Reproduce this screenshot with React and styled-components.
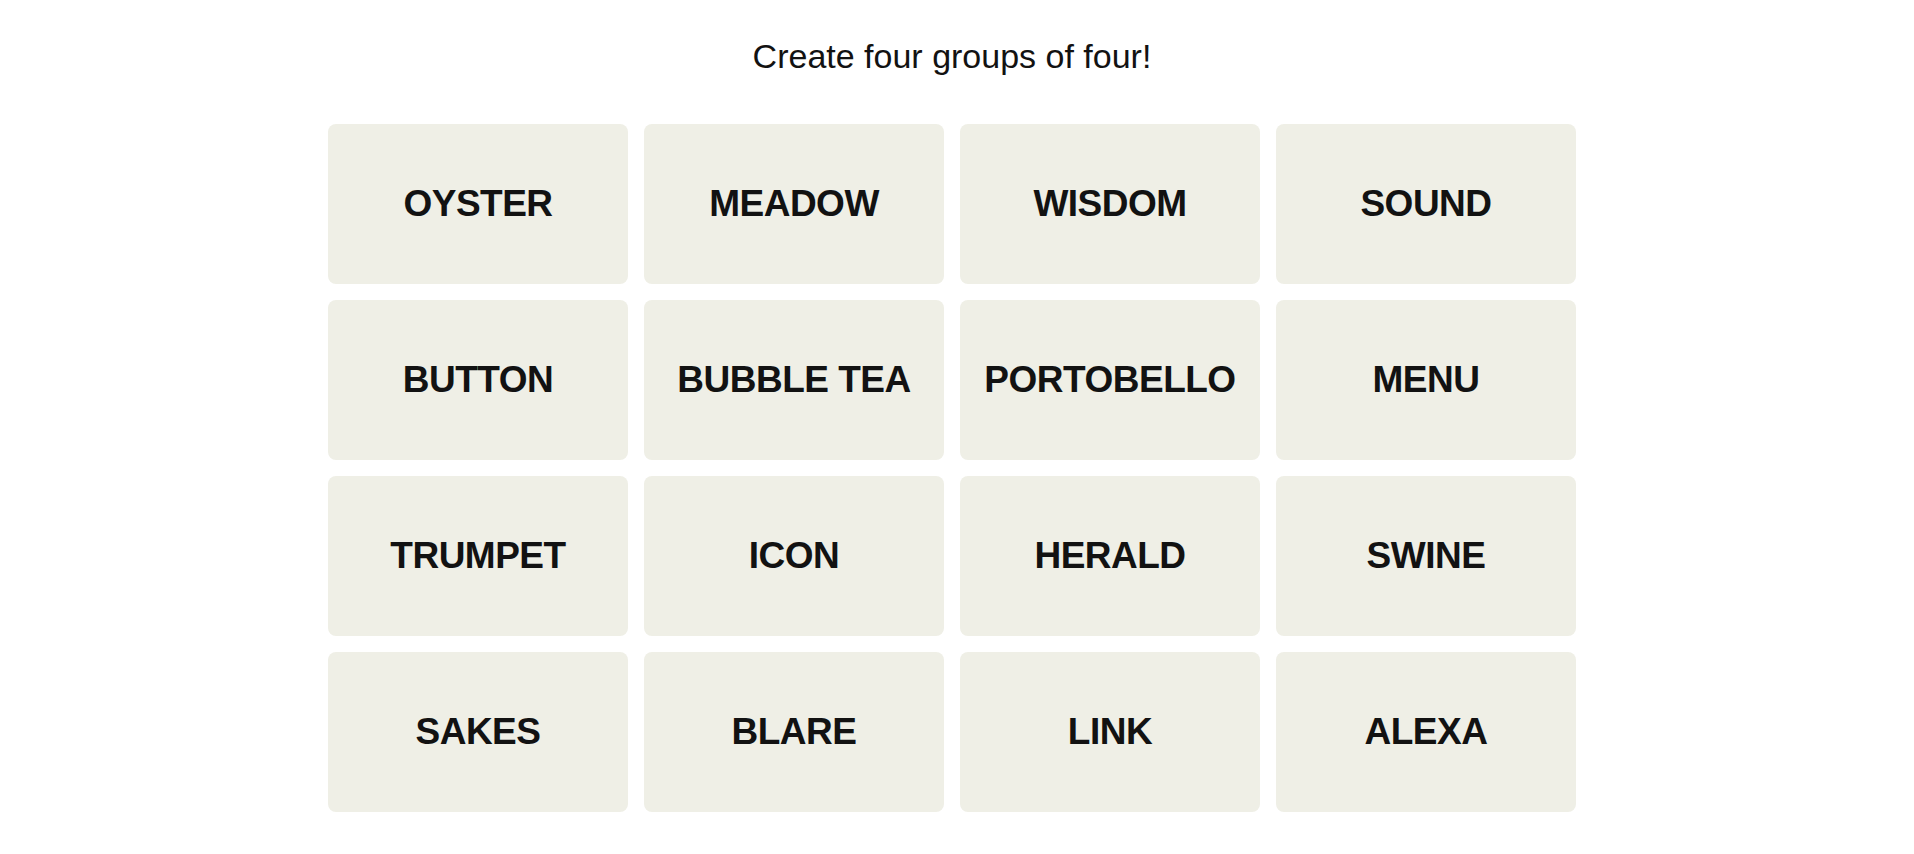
import React from 'react'
import styled, { createGlobalStyle } from 'styled-components'

const GlobalStyle = createGlobalStyle`
  body {
    margin: 0;
    background: #ffffff;
    font-family: "Liberation Sans", Arial, sans-serif;
    color: #121212;
  }
`

const Page = styled.main`
  display: flex;
  flex-direction: column;
  align-items: center;
  padding: 36px 10px 0 0;
`

const Title = styled.h2`
  margin: 0 0 48px;
  font-size: 34px;
  line-height: 40px;
  font-weight: 400;
  color: #121212;
`

const Board = styled.div`
  display: grid;
  grid-template-columns: repeat(4, 300px);
  grid-auto-rows: 160px;
  gap: 16px;
`

const Tile = styled.button`
  display: flex;
  align-items: center;
  justify-content: center;
  border: none;
  border-radius: 8px;
  background: #efefe6;
  color: #121212;
  font-family: "Liberation Sans", Arial, sans-serif;
  font-size: 37px;
  font-weight: 700;
  letter-spacing: -0.5px;
  text-transform: uppercase;
  cursor: pointer;
  padding: 0;
`

const words = [
  'Oyster', 'Meadow', 'Wisdom', 'Sound',
  'Button', 'Bubble Tea', 'Portobello', 'Menu',
  'Trumpet', 'Icon', 'Herald', 'Swine',
  'Sakes', 'Blare', 'Link', 'Alexa',
]

const App = () => {
  return (
    <>
      <GlobalStyle />
      <Page>
        <Title>Create four groups of four!</Title>
        <Board>
          {words.map(w => <Tile key={w}>{w}</Tile>)}
        </Board>
      </Page>
    </>
  )
}

export default App
